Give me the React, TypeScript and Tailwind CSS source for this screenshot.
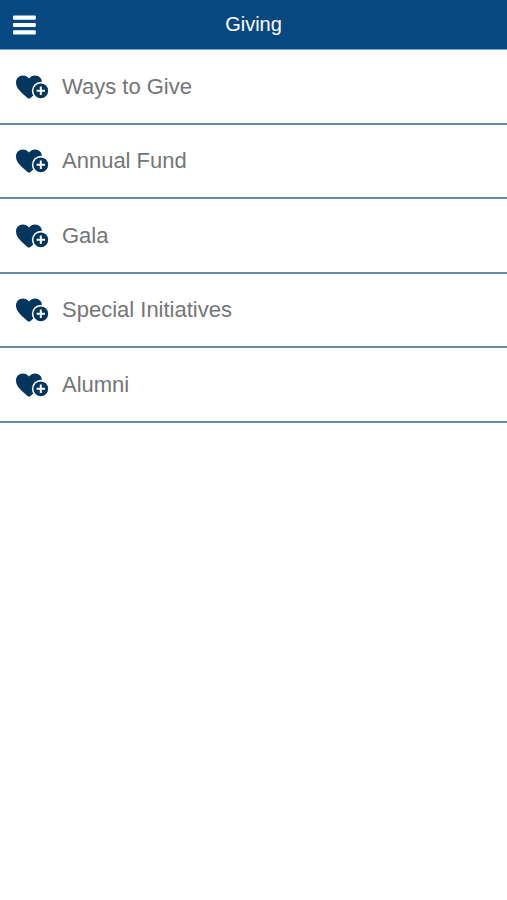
const links = [
  { label: 'Ways to Give', href: '#ways-to-give' },
  { label: 'Annual Fund', href: '#annual-fund' },
  { label: 'Gala', href: '#gala' },
  { label: 'Special Initiatives', href: '#special-initiatives' },
  { label: 'Alumni', href: '#alumni' },
];

function MenuIcon() {
  return (
    <svg width="24" height="20" viewBox="0 0 24 20" fill="#ffffff" aria-hidden="true">
      <rect x="1" y="0.5" width="22.8" height="4.2" rx="1" />
      <rect x="1" y="7.9" width="22.8" height="4.2" rx="1" />
      <rect x="1" y="15.3" width="22.8" height="4.2" rx="1" />
    </svg>
  );
}

function HeartPlusIcon() {
  return (
    <svg width="34" height="26" viewBox="0 0 34 26" className="shrink-0" aria-hidden="true">
      <path
        d="M13 4.4C11.4 2.3 9.3 1.4 7 1.4C2.8 1.4 0 4.4 0 8.6C0 12 1.6 14.4 3.8 16.8C6.1 19.3 8.9 21.9 11.5 24C12.5 24.8 13.5 24.8 14.5 24C17.1 21.9 19.9 19.3 22.2 16.8C24.4 14.4 26 12 26 8.6C26 4.4 23.2 1.4 19 1.4C16.7 1.4 14.6 2.3 13 4.4Z"
        fill="#02365f"
      />
      <circle cx="24.8" cy="16.8" r="9" fill="#ffffff" />
      <circle cx="24.8" cy="16.8" r="7.4" fill="#02365f" />
      <path d="M24.8 12.6V21M20.6 16.8H29" stroke="#ffffff" strokeWidth="2" />
    </svg>
  );
}

export default function App() {
  return (
    <div className="min-h-screen bg-white font-['Liberation_Sans',Arial,sans-serif]">
      <header className="grid h-[50px] grid-cols-[1fr_auto_1fr] items-center border-b border-[#7ba5c9] bg-[#074881] px-3">
        <button type="button" aria-label="Open menu" className="justify-self-start">
          <MenuIcon />
        </button>
        <h1 className="pb-0.5 text-[20px] leading-6 text-white">Giving</h1>
      </header>

      <nav aria-label="Giving">
        <ul>
          {links.map((link) => (
            <li key={link.href} className="h-[75px] border-b-2 border-[#6189ab] even:h-[74px]">
              <a href={link.href} className="flex h-full items-center gap-3 px-4 text-[#747677]">
                <HeartPlusIcon />
                <span className="text-[22px] leading-7">{link.label}</span>
              </a>
            </li>
          ))}
        </ul>
      </nav>
    </div>
  );
}
